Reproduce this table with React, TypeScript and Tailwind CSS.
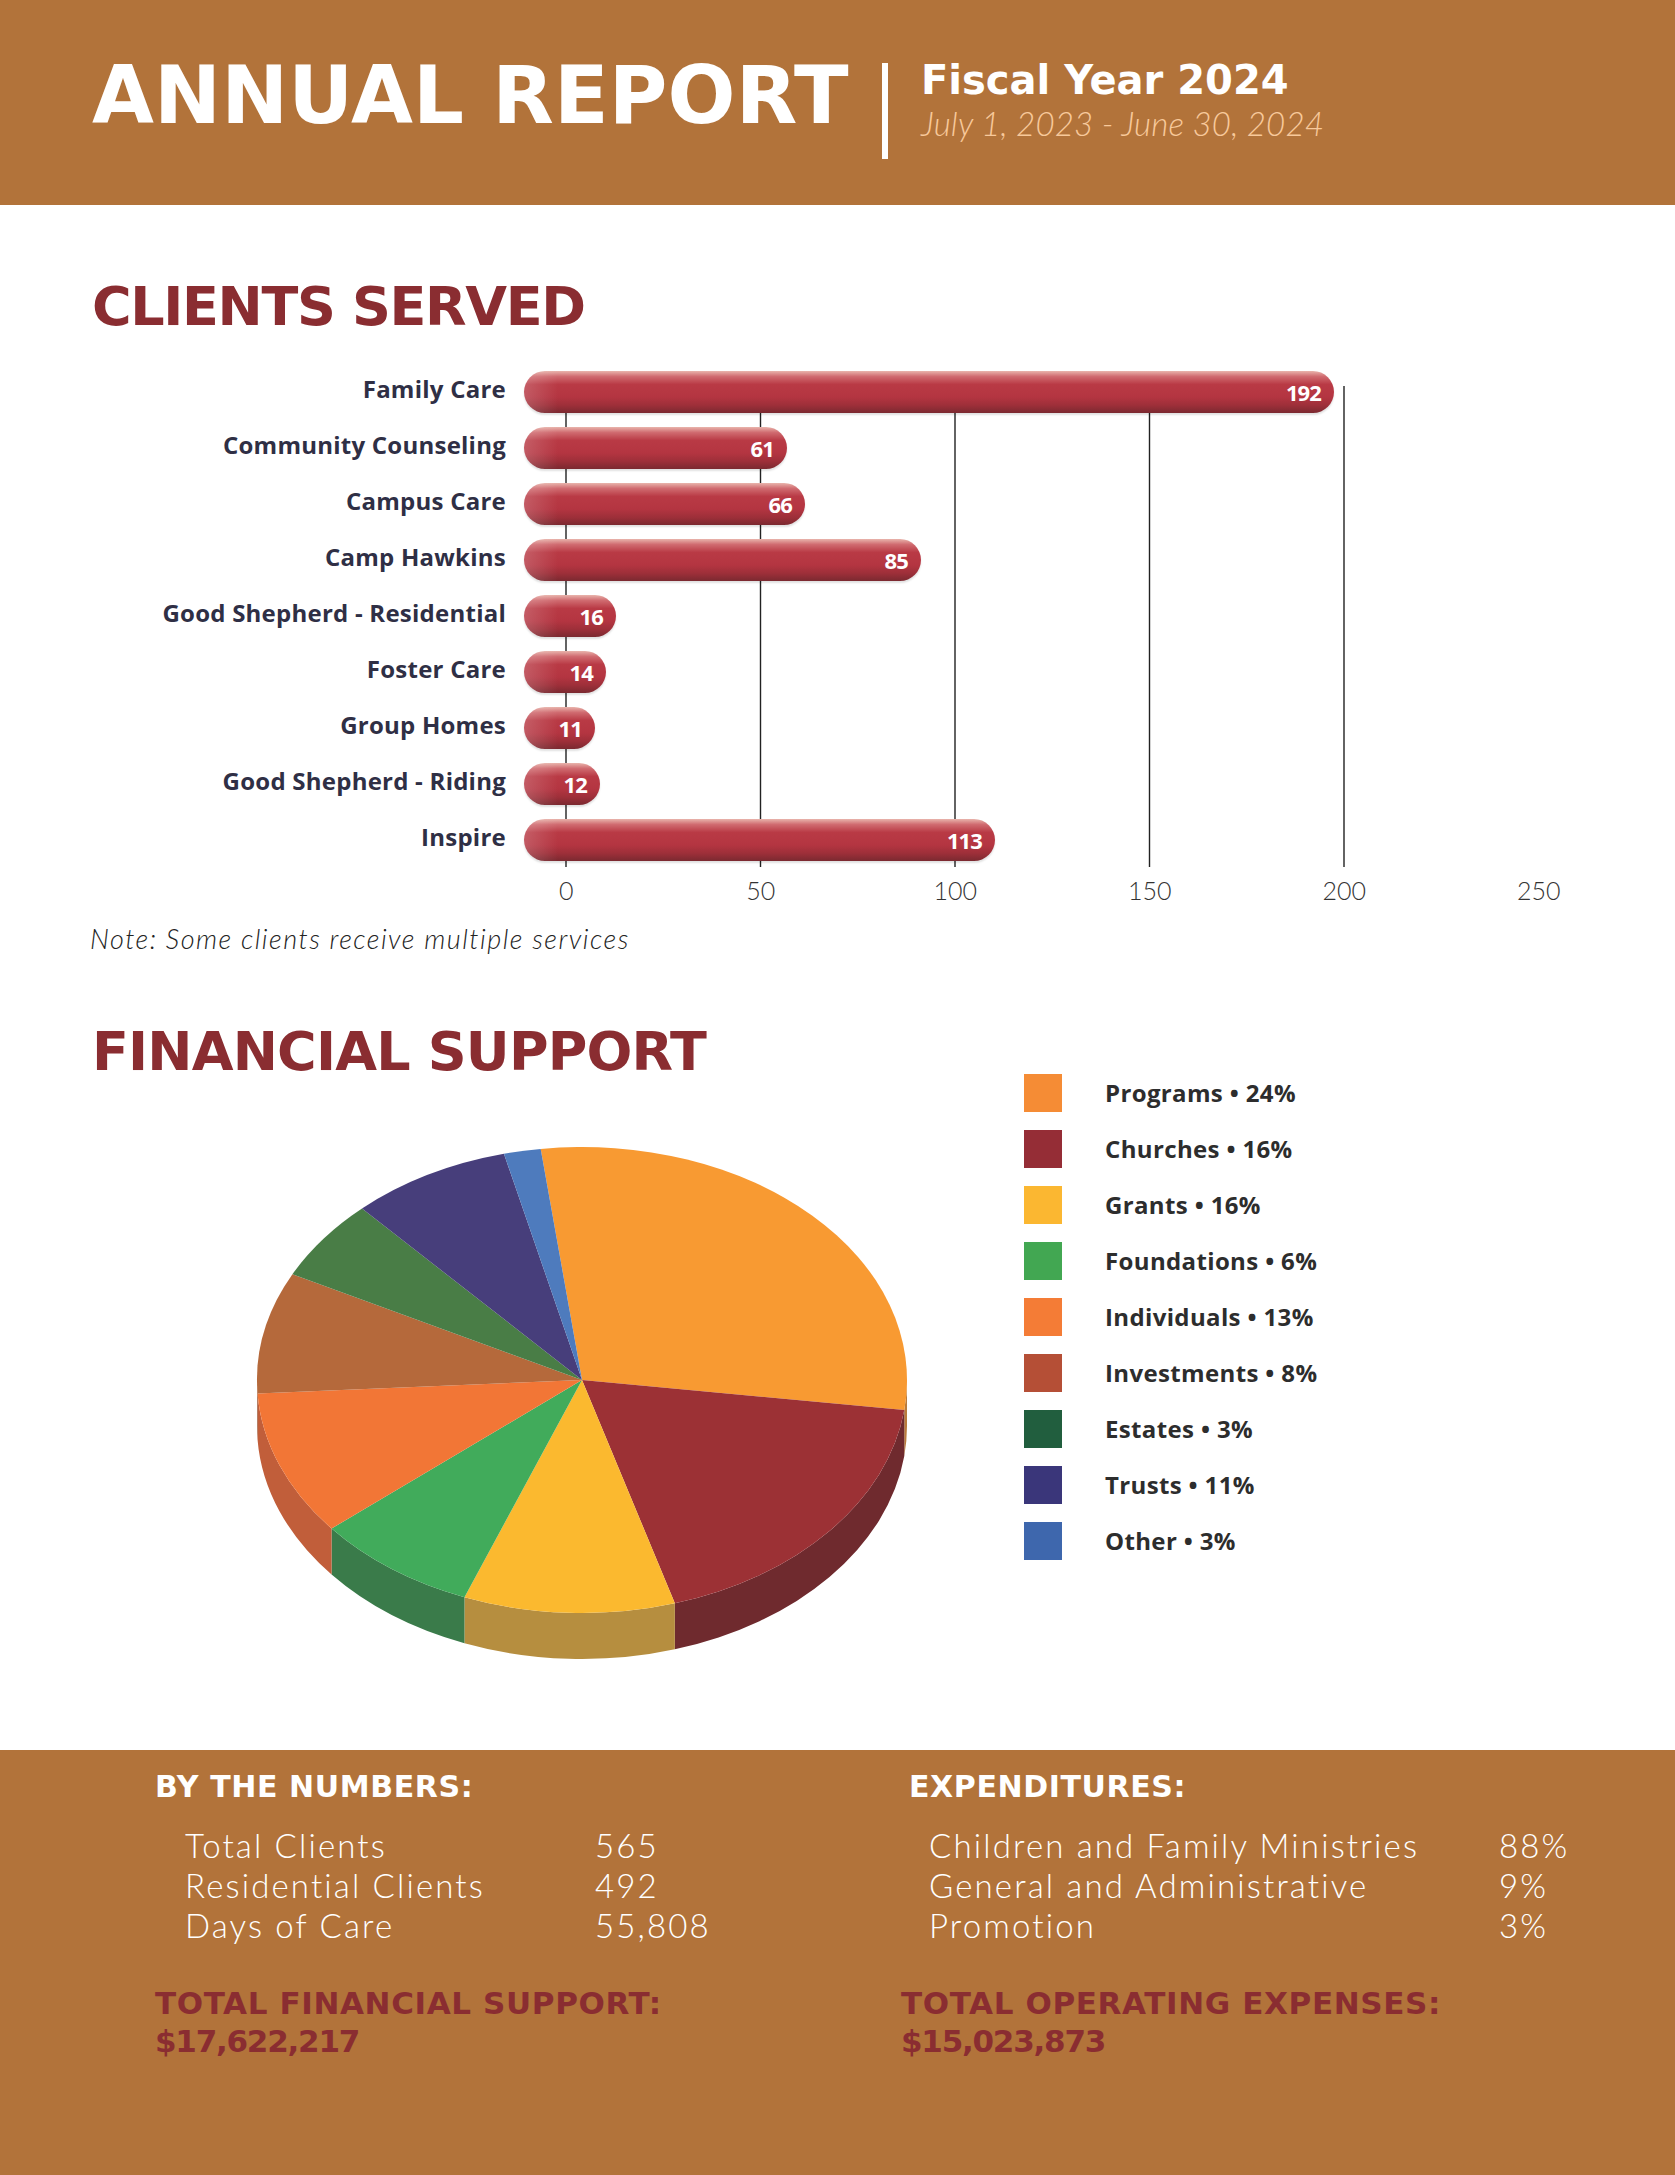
import React from 'react'

const bars = [
  { label: 'Family Care', value: 192, width: 810 },
  { label: 'Community Counseling', value: 61, width: 263 },
  { label: 'Campus Care', value: 66, width: 281 },
  { label: 'Camp Hawkins', value: 85, width: 397 },
  { label: 'Good Shepherd - Residential', value: 16, width: 92 },
  { label: 'Foster Care', value: 14, width: 82 },
  { label: 'Group Homes', value: 11, width: 71 },
  { label: 'Good Shepherd - Riding', value: 12, width: 76 },
  { label: 'Inspire', value: 113, width: 471 },
]

const ticks = [0, 50, 100, 150, 200, 250]

// pie slices: parametric angles on the ellipse (deg, y pointing down)
const slices = [
  { name: 'Programs', pct: '24%', from: -97.3, to: 7.4, top: '#f89a32', side: '#b97b3b', key: '#f58c35' },
  { name: 'Churches', pct: '16%', from: 7.4, to: 73.4, top: '#9c3135', side: '#6f2a2e', key: '#952d36' },
  { name: 'Grants', pct: '16%', from: 73.4, to: 111.2, top: '#fbb92f', side: '#b68e3f', key: '#fbb731' },
  { name: 'Foundations', pct: '6%', from: 111.2, to: 140.4, top: '#41ab5b', side: '#3a7b4a', key: '#42a752' },
  { name: 'Individuals', pct: '13%', from: 140.4, to: 176.7, top: '#f27636', side: '#c15e3a', key: '#f47c36' },
  { name: 'Investments', pct: '8%', from: 176.7, to: 207, top: '#b5693b', side: '#8e5231', key: '#b54f36' },
  { name: 'Estates', pct: '3%', from: 207, to: 227.4, top: '#497d46', side: '#355d34', key: '#215e3e' },
  { name: 'Trusts', pct: '11%', from: 227.4, to: 256.1, top: '#473e7b', side: '#332d5a', key: '#3a367a' },
  { name: 'Other', pct: '3%', from: 256.1, to: 262.7, top: '#4e7bbd', side: '#3a5c8e', key: '#3e67ad' },
]

const CX = 342
const CY = 250
const RX = 325
const RY = 233
const DEPTH = 46

function pt(deg: number, dy = 0) {
  const r = (deg * Math.PI) / 180
  return `${(CX + RX * Math.cos(r)).toFixed(2)} ${(CY + RY * Math.sin(r) + dy).toFixed(2)}`
}

function topPath(a: number, b: number) {
  const large = b - a > 180 ? 1 : 0
  return `M ${CX} ${CY} L ${pt(a)} A ${RX} ${RY} 0 ${large} 1 ${pt(b)} Z`
}

function sidePath(a: number, b: number) {
  const s = Math.max(a, 0)
  const e = Math.min(b, 180)
  if (e <= s) return null
  return `M ${pt(s)} A ${RX} ${RY} 0 0 1 ${pt(e)} L ${pt(e, DEPTH)} A ${RX} ${RY} 0 0 0 ${pt(s, DEPTH)} Z`
}

function Pie() {
  return (
    <svg width="690" height="550" viewBox="0 0 690 550">
      {slices.map((s) => {
        const d = sidePath(s.from, s.to)
        return d ? <path key={s.name + '-side'} d={d} fill={s.side} /> : null
      })}
      {slices.map((s) => (
        <path key={s.name} d={topPath(s.from, s.to)} fill={s.top} />
      ))}
    </svg>
  )
}

const heavy = "font-['DejaVu_Sans',sans-serif] font-bold"
const label = "font-['Open_Sans',sans-serif] font-bold"
const light = "font-['Lato',sans-serif] font-light"

export default function App() {
  return (
    <div className="w-[1675px] h-[2175px] bg-white flex flex-col">
      {/* ── Header ───────────────────────── */}
      <header className="h-[205px] shrink-0 bg-[#b2733a] flex items-start pl-[92px]">
        <h1 className={`${heavy} w-[790px] mt-[56px] text-[80px] leading-none tracking-[0.002em] text-white whitespace-nowrap`}>
          ANNUAL REPORT
        </h1>
        <div className="w-[6px] h-[96px] mt-[63px] bg-white" />
        <div className="ml-[33px] mt-[60px] flex flex-col">
          <span className={`${heavy} text-[40px] leading-none text-white`}>Fiscal Year 2024</span>
          <span className={`${light} italic mt-[7px] text-[33px] leading-none text-[#f8c99b] tracking-[0.005em]`}>
            July 1, 2023 - June 30, 2024
          </span>
        </div>
      </header>

      {/* ── Body ─────────────────────────── */}
      <main className="flex-1 pl-[92px]">
        <h2 className={`${heavy} mt-[75px] text-[54px] leading-none text-[#8a2d31] tracking-[-0.025em]`}>
          CLIENTS SERVED
        </h2>

        {/* Bar chart */}
        <div className="relative mt-[30px]">
          <svg className="absolute left-[432px] top-0" width="1010" height="510">
            {ticks.map((t, i) => (
              <line key={t} x1={42 + i * 194.5} x2={42 + i * 194.5} y1={22} y2={503} stroke="#222" strokeWidth={1.4} />
            ))}
          </svg>
          <div className="relative flex flex-col">
            {bars.map((b) => (
              <div key={b.label} className="h-[56px] flex items-center">
                <span className={`${label} w-[414px] text-right text-[24px] leading-none text-[#2f2f45] tracking-[0.01em] pb-[6px]`}>
                  {b.label}
                </span>
                <div
                  className="ml-[18px] h-[42px] rounded-full flex items-center justify-end pr-[13px] bg-[linear-gradient(90deg,rgba(255,255,255,0.18)_0px,rgba(255,255,255,0)_34px),linear-gradient(180deg,#e9b4ac_0%,#d06b70_13%,#b93a45_32%,#b43541_62%,#9d2f39_82%,#7b2930_100%)] shadow-[0_2px_2px_rgba(0,0,0,0.12)]"
                  style={{ width: b.width }}
                >
                  <span className={`${label} text-[22px] leading-none text-white tracking-[-0.04em]`}>{b.value}</span>
                </div>
              </div>
            ))}
          </div>
          <div className="ml-[377px] mt-[10px] flex">
            {ticks.map((t) => (
              <span key={t} className={`${light} w-[194.5px] shrink-0 text-center text-[25px] leading-none text-[#333]`}>
                {t}
              </span>
            ))}
          </div>
        </div>

        <p className={`${light} italic -ml-[2px] mt-[22px] text-[27px] leading-none text-[#222] tracking-[0.055em]`}>
          Note: Some clients receive multiple services
        </p>

        {/* Financial support */}
        <div className="mt-[73px] flex">
          <div className="w-[838px] flex flex-col">
            <h2 className={`${heavy} text-[54px] leading-none text-[#8a2d31] tracking-[-0.015em]`}>
              FINANCIAL SUPPORT
            </h2>
            <div className="ml-[148px] mt-[51px]">
              <Pie />
            </div>
          </div>
          <ul className="ml-[94px] mt-[40px] flex flex-col">
            {slices.map((s) => (
              <li key={s.name} className="h-[56px] flex items-center">
                <span className="w-[38px] h-[38px]" style={{ backgroundColor: s.key }} />
                <span className={`${label} ml-[43px] text-[24px] leading-none text-[#2d2d2d] tracking-[0.015em]`}>
                  {s.name} • {s.pct}
                </span>
              </li>
            ))}
          </ul>
        </div>
      </main>

      {/* ── Footer band ──────────────────── */}
      <footer className="h-[425px] shrink-0 bg-[#b2733a] flex pt-[22px] pl-[155px]">
        <div className="w-[754px] flex flex-col">
          <h3 className={`${heavy} text-[30px] leading-none text-white tracking-[0.02em]`}>BY THE NUMBERS:</h3>
          <div className={`${light} ml-[30px] mt-[23px] text-[33px] leading-[40px] text-white tracking-[0.065em]`}>
            {[
              ['Total Clients', '565'],
              ['Residential Clients', '492'],
              ['Days of Care', '55,808'],
            ].map(([k, v]) => (
              <div key={k} className="flex">
                <span className="w-[410px]">{k}</span>
                <span>{v}</span>
              </div>
            ))}
          </div>
          <div className={`${heavy} mt-[39px] text-[31px] leading-[38px] text-[#8a2d31]`}>
            <p className="tracking-[0.02em]">TOTAL FINANCIAL SUPPORT:</p>
            <p className="tracking-[-0.04em]">$17,622,217</p>
          </div>
        </div>
        <div className="flex flex-col">
          <h3 className={`${heavy} text-[30px] leading-none text-white tracking-[0.02em]`}>EXPENDITURES:</h3>
          <div className={`${light} ml-[20px] mt-[23px] text-[33px] leading-[40px] text-white tracking-[0.065em]`}>
            {[
              ['Children and Family Ministries', '88%'],
              ['General and Administrative', '9%'],
              ['Promotion', '3%'],
            ].map(([k, v]) => (
              <div key={k} className="flex">
                <span className="w-[570px]">{k}</span>
                <span>{v}</span>
              </div>
            ))}
          </div>
          <div className={`${heavy} -ml-[8px] mt-[39px] text-[31px] leading-[38px] text-[#8a2d31]`}>
            <p className="tracking-[0.02em]">TOTAL OPERATING EXPENSES:</p>
            <p className="tracking-[-0.04em]">$15,023,873</p>
          </div>
        </div>
      </footer>
    </div>
  )
}
